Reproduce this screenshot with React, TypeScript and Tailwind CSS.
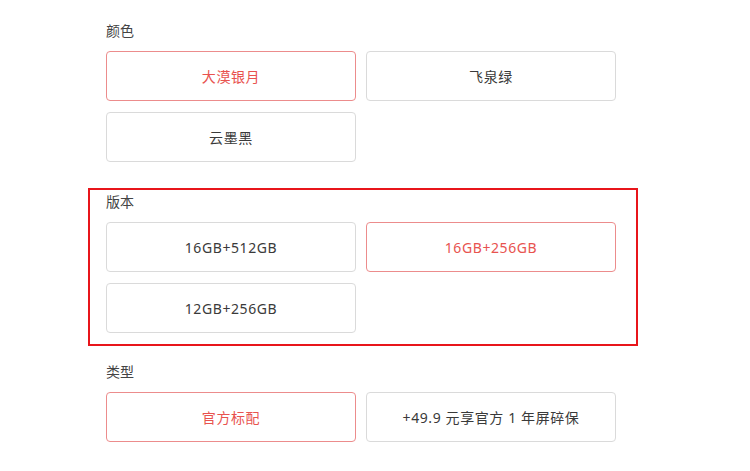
import React from 'react'

type Option = { label: string; active?: boolean }

const colors: Option[] = [
  { label: '大漠银月', active: true },
  { label: '飞泉绿' },
  { label: '云墨黑' },
]

const versions: Option[] = [
  { label: '16GB+512GB' },
  { label: '16GB+256GB', active: true },
  { label: '12GB+256GB' },
]

const types: Option[] = [
  { label: '官方标配', active: true },
  { label: '+49.9 元享官方 1 年屏碎保' },
]

const OptionGrid = ({ items }: { items: Option[] }) => (
  <div className="grid grid-cols-[250px_250px] gap-x-[10px] gap-y-[11px]">
    {items.map((item) => (
      <button
        key={item.label}
        className={
          item.active
            ? 'h-[50px] rounded-[4px] border border-[#ec8c8c] text-[#e8534f] text-[14px] tracking-[0.6px]'
            : 'h-[50px] rounded-[4px] border border-[#dadada] text-[#3a3a3a] text-[14px] tracking-[0.6px]'
        }
      >
        {item.label}
      </button>
    ))}
  </div>
)

const Section = ({ title, items }: { title: string; items: Option[] }) => (
  <div>
    <div className="h-[20px] leading-[20px] text-[14px] text-[#444] mb-[10px]">{title}</div>
    <OptionGrid items={items} />
  </div>
)

export default function App() {
  return (
    <div
      className="w-[750px] h-[471px] bg-white overflow-hidden"
      style={{ fontFamily: '"Noto Sans", "Noto Sans CJK SC", sans-serif' }}
    >
      <div className="w-[510px] ml-[106px] pt-[21px]">
        <Section title="颜色" items={colors} />
        <div className="-ml-[18px] -mr-[22px] mt-[26px] border-2 border-[#e8151b] pl-[16px] pr-[20px] pt-[2px] pb-[11px]">
          <Section title="版本" items={versions} />
        </div>
        <div className="mt-[16px]">
          <Section title="类型" items={types} />
        </div>
      </div>
    </div>
  )
}
